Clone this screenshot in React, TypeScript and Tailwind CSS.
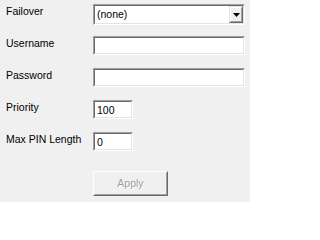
import React from "react";

// classic sunken 3D edit field
const Sunken = ({
  className,
  children,
}: {
  className: string;
  children?: React.ReactNode;
}) => (
  <div
    className={
      "border border-t-[#a0a0a0] border-l-[#a0a0a0] border-b-white border-r-white " +
      className
    }
  >
    <div className="flex h-full w-full border border-t-[#696969] border-l-[#696969] border-b-[#e3e3e3] border-r-[#e3e3e3] bg-white">
      {children}
    </div>
  </div>
);

const Label = ({ text }: { text: string }) => (
  <div className="w-[87px] shrink-0 pt-[1px] leading-[13px] text-black">{text}</div>
);

const FieldText = ({ text }: { text: string }) => (
  <span className="pl-[2px] pt-[1px] leading-[15px] text-black">{text}</span>
);

export default function App() {
  return (
    <div
      className="h-[202px] w-[250px] bg-[#f0f0f0] pl-[6px] pt-[4px] text-[10.5px]"
      style={{ fontFamily: '"Liberation Sans", Arial, sans-serif' }}
    >
      <div className="flex">
        <Label text="Failover" />
        <Sunken className="h-[21px] w-[152px]">
          <div className="flex flex-1 items-center pl-[2px] pt-[1px] text-black">(none)</div>
          <div className="border border-t-[#e3e3e3] border-l-[#e3e3e3] border-b-[#696969] border-r-[#696969]">
            <div className="flex h-full w-[12px] items-center justify-center border border-t-white border-l-white border-b-[#a0a0a0] border-r-[#a0a0a0] bg-[#f0f0f0]">
              <svg width="7" height="4" viewBox="0 0 7 4">
                <polygon points="0,0 7,0 3.5,4" fill="#000" />
              </svg>
            </div>
          </div>
        </Sunken>
      </div>

      <div className="mt-[11px] flex">
        <Label text="Username" />
        <Sunken className="h-[19px] w-[152px]" />
      </div>

      <div className="mt-[13px] flex">
        <Label text="Password" />
        <Sunken className="h-[19px] w-[152px]" />
      </div>

      <div className="mt-[13px] flex">
        <Label text="Priority" />
        <Sunken className="h-[19px] w-[40px]">
          <FieldText text="100" />
        </Sunken>
      </div>

      <div className="mt-[13px] flex">
        <Label text="Max PIN Length" />
        <Sunken className="h-[19px] w-[40px]">
          <FieldText text="0" />
        </Sunken>
      </div>

      <div className="ml-[87px] mt-[20px] h-[25px] w-[75px] border border-t-white border-l-white border-b-[#696969] border-r-[#696969]">
        <div className="flex h-full w-full items-center justify-center border border-t-[#f0f0f0] border-l-[#f0f0f0] border-b-[#a0a0a0] border-r-[#a0a0a0]">
          <span className="text-[#a0a0a0] [text-shadow:1px_1px_0_#fff]">Apply</span>
        </div>
      </div>
    </div>
  );
}
